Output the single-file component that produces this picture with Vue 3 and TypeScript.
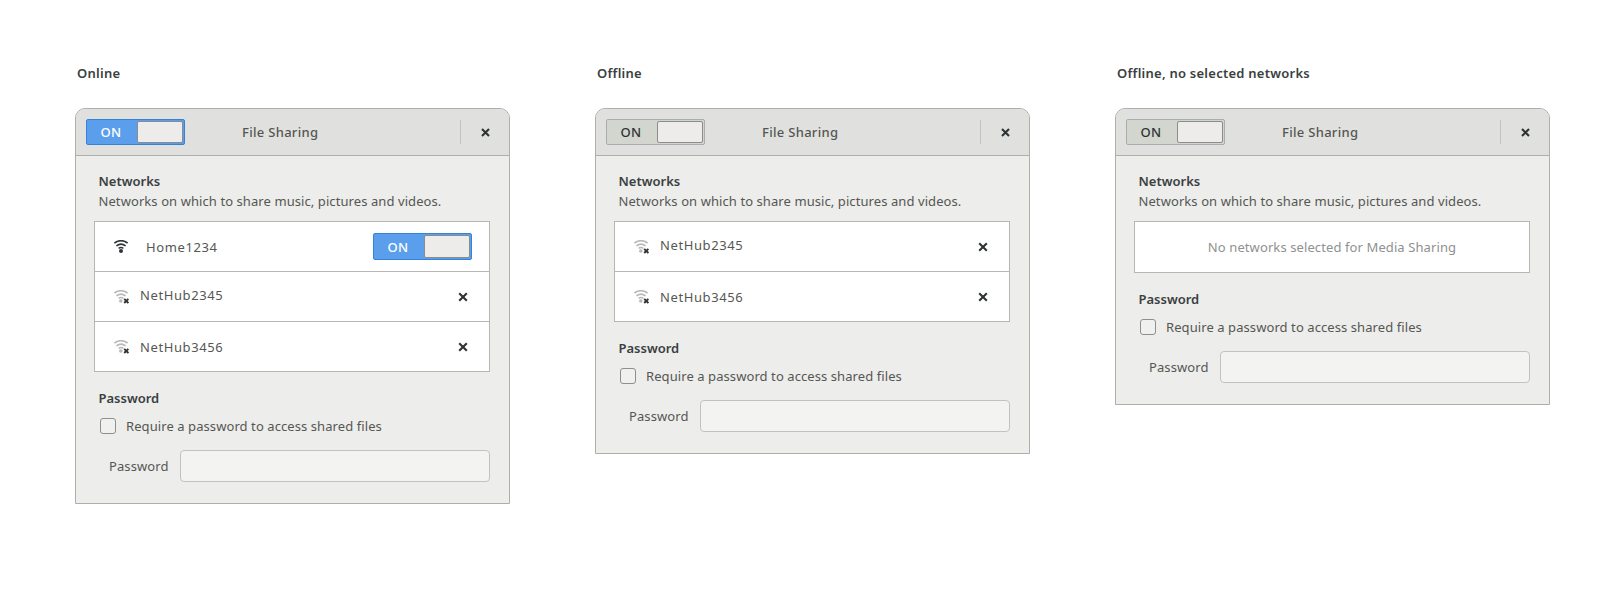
<script setup lang="ts">
interface Network {
  name: string
  raised?: boolean
}

interface Panel {
  label: string
  online: boolean
  current?: string
  networks: Network[]
}

const panels: Panel[] = [
  {
    label: 'Online',
    online: true,
    current: 'Home1234',
    networks: [{ name: 'NetHub2345', raised: true }, { name: 'NetHub3456' }],
  },
  {
    label: 'Offline',
    online: false,
    networks: [{ name: 'NetHub2345', raised: true }, { name: 'NetHub3456' }],
  },
  {
    label: 'Offline, no selected networks',
    online: false,
    networks: [],
  },
]
</script>

<template>
  <div class="page">
    <section v-for="panel in panels" :key="panel.label" class="panel">
      <h2 class="panel-label">{{ panel.label }}</h2>
      <div class="window">
        <header class="titlebar">
          <div class="switch" :class="{ on: panel.online }">
            <span class="switch-text">ON</span>
            <span class="switch-thumb"></span>
          </div>
          <span class="title">File Sharing</span>
          <span class="divider"></span>
          <svg class="close" viewBox="0 0 9 9" width="9" height="9">
            <path d="M1 1l7 7M8 1L1 8" />
          </svg>
        </header>

        <div class="content">
          <h3 class="heading">Networks</h3>
          <p class="hint">Networks on which to share music, pictures and videos.</p>

          <div class="list">
            <div v-if="panel.current" class="row current">
              <svg class="wifi" viewBox="0 0 14 13" width="14" height="13">
                <path class="arc" d="M.4 3Q7-1.6 13.6 3" />
                <path class="arc" d="M2.4 5.8Q7 2.4 11.6 5.8" />
                <path class="arc" d="M4.6 8.3Q7 6.6 9.4 8.3" />
                <circle cx="7" cy="11" r="2" />
              </svg>
              <span class="name">{{ panel.current }}</span>
              <div class="switch on small">
                <span class="switch-text">ON</span>
                <span class="switch-thumb"></span>
              </div>
            </div>

            <div v-for="net in panel.networks" :key="net.name" class="row">
              <svg class="wifi off" viewBox="0 0 15 14" width="15" height="14">
                <path class="arc" d="M.4 3Q7-1.6 13.6 3" />
                <path class="arc" d="M2.4 5.8Q7 2.4 11.6 5.8" />
                <path class="arc" d="M4.6 8.3Q7 6.6 9.4 8.3" />
                <circle cx="6.8" cy="11" r="1.8" />
                <path class="cross" d="M10.2 8.8l4.2 4.2M14.4 8.8l-4.2 4.2" />
              </svg>
              <span class="name" :class="{ raised: net.raised }">{{ net.name }}</span>
              <svg class="remove" viewBox="0 0 10 10" width="10" height="10">
                <path d="M1.2 1.2l7.6 7.6M8.8 1.2L1.2 8.8" />
              </svg>
            </div>

            <div v-if="!panel.networks.length && !panel.current" class="empty">
              No networks selected for Media Sharing
            </div>
          </div>

          <h3 class="heading password-heading">Password</h3>
          <label class="check-row">
            <span class="checkbox"></span>
            <span>Require a password to access shared files</span>
          </label>
          <div class="field-row">
            <span class="field-label">Password</span>
            <span class="field"></span>
          </div>
        </div>
      </div>
    </section>
  </div>
</template>

<style>
body {
  background: #ffffff;
}
</style>

<style scoped>
.page {
  display: flex;
  gap: 85px;
  padding: 63px 0 0 75px;
  font-family: "Noto Sans", sans-serif;
  font-size: 13px;
  line-height: 20px;
  color: #2e3436;
}

.panel {
  width: 435px;
}

.panel-label {
  margin: 0 0 25px;
  padding-left: 2px;
  font-size: 13px;
  font-weight: 600;
  line-height: 20px;
  letter-spacing: 0.25px;
  color: #3a3f41;
}

.window {
  border: 1px solid #aeaeab;
  border-radius: 10px 10px 0 0;
  background: #ededeb;
}

.titlebar {
  position: relative;
  display: flex;
  align-items: center;
  height: 46px;
  padding: 0 19px 0 10px;
  border-bottom: 1px solid #aeaeab;
  border-radius: 9px 9px 0 0;
  background: #e0e1de;
}

.title {
  margin-left: 57px;
  font-weight: 500;
  letter-spacing: 0.3px;
  color: #555753;
}

.divider {
  width: 1px;
  height: 24px;
  margin-left: auto;
  margin-right: 20px;
  background: #c3c4c1;
}

.close,
.remove {
  flex: none;
  fill: none;
  stroke: #2e3436;
  stroke-width: 2.1;
}

.switch {
  flex: none;
  display: flex;
  align-items: center;
  justify-content: space-between;
  box-sizing: border-box;
  width: 99px;
  height: 26px;
  padding: 1px;
  border: 1px solid #a6aeb2;
  border-radius: 2px;
  background: #d3d6cf;
}

.switch.on {
  border-color: #3583d8;
  background: #5b9fec;
}

.switch.small {
  margin-left: auto;
  height: 27px;
}

.switch-text {
  margin-left: 12.5px;
  font-weight: 500;
  letter-spacing: 0.3px;
  color: #2e3436;
}

.switch.on .switch-text {
  color: #ffffff;
}

.switch-thumb {
  width: 46px;
  height: 22px;
  box-sizing: border-box;
  border: 1px solid #8b8b88;
  border-radius: 2px;
  background: #edecea;
}

.switch.small .switch-thumb {
  height: 23px;
}

.content {
  padding: 15px 19px 21px 18px;
}

.heading {
  margin: 0;
  padding-left: 4.5px;
  font-size: 13px;
  font-weight: 600;
  line-height: 20px;
  color: #3a3f41;
}

.hint {
  margin: 0 0 10px;
  padding-left: 4.5px;
  letter-spacing: 0.08px;
  color: #555753;
}

.list {
  border: 1px solid #b6b6b3;
  background: #ffffff;
}

.row {
  display: flex;
  align-items: center;
  height: 49px;
  padding: 0 21px 0 19px;
  border-top: 1px solid #b6b6b3;
  color: #555753;
}

.row:first-child {
  border-top: 0;
}

.row.current {
  padding-right: 17px;
}

.current .name {
  margin-left: 18px;
}

.wifi {
  flex: none;
  fill: #2e3436;
}

.arc {
  fill: none;
  stroke: #2e3436;
  stroke-width: 1.6;
}

.wifi.off {
  fill: #b9b9b7;
}

.wifi.off .arc {
  stroke: #b9b9b7;
}

.cross {
  fill: none;
  stroke: #2e3436;
  stroke-width: 1.9;
}

.name {
  margin-left: 11px;
  letter-spacing: 0.6px;
}

.name.raised {
  margin-bottom: 3px;
}

.remove {
  margin-left: auto;
}

.empty {
  height: 50px;
  line-height: 50px;
  text-align: center;
  letter-spacing: 0.1px;
  color: #8f9190;
}

.password-heading {
  margin-top: 16px;
}

.check-row {
  display: flex;
  align-items: center;
  gap: 10px;
  margin-top: 8px;
  padding-left: 6px;
  letter-spacing: 0.08px;
  color: #555753;
}

.checkbox {
  box-sizing: border-box;
  width: 16px;
  height: 16px;
  border: 1px solid #8f8f8c;
  border-radius: 3px;
  background: #f0f0ee;
}

.field-row {
  display: flex;
  align-items: center;
  gap: 11px;
  margin-top: 14px;
  padding-left: 15px;
  color: #555753;
}

.field-label {
  letter-spacing: 0.1px;
}

.field {
  flex: 1;
  height: 32px;
  box-sizing: border-box;
  border: 1px solid #c2c2bf;
  border-radius: 4px;
  background: #f3f3f1;
}
</style>
